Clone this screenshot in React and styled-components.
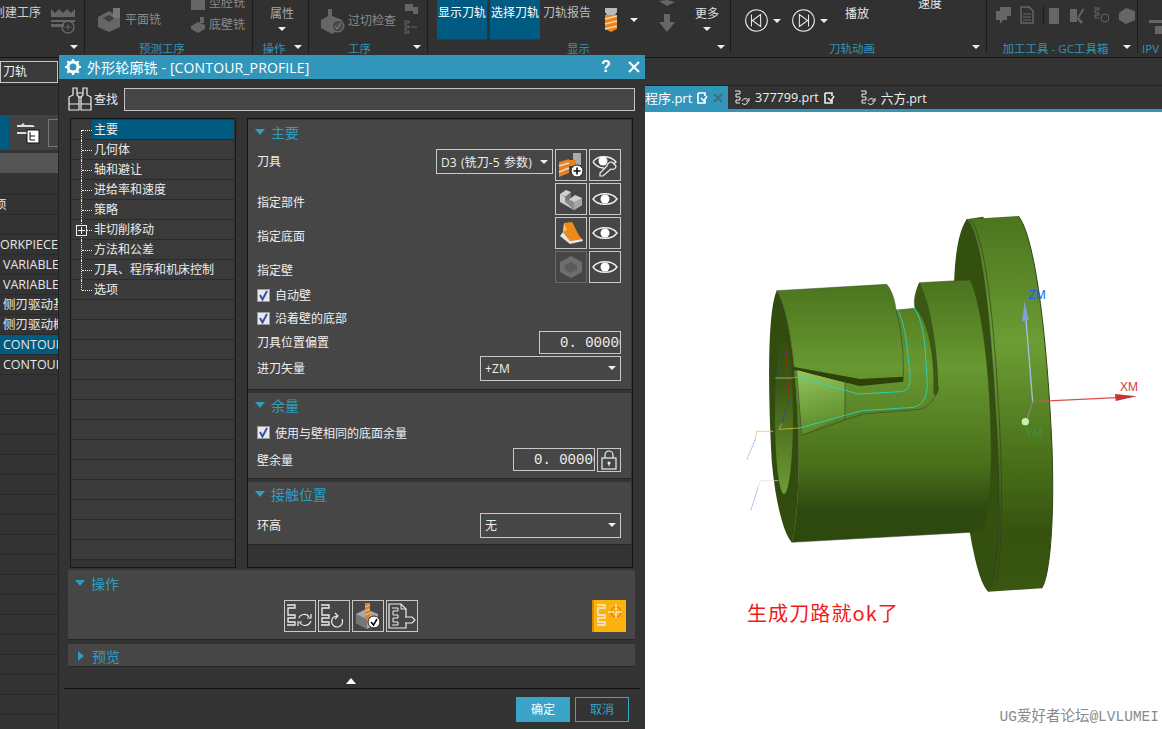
import React from 'react';
import styled, { createGlobalStyle } from 'styled-components';

const Global = createGlobalStyle`
  html, body { margin: 0; padding: 0; background: #333; }
  * { box-sizing: border-box; }
  body { font-family: "Open Sans", "Noto Sans CJK SC", sans-serif; font-size: 12px; color: #eee; }
`;

const Root = styled.div`
  position: relative; width: 1162px; height: 729px; overflow: hidden;
  display: flex; flex-direction: column; background: #333;
`;

/* ribbon */
const Ribbon = styled.div`
  display: flex; height: 58px; background: #313131; border-bottom: 1px solid #141414; flex: none; overflow: hidden;
`;
const Group = styled.div`
  width: ${p => p.$w}px; height: 57px; flex: none; position: relative; overflow: hidden;
  display: flex; flex-direction: column;
  &::after {
    content: ''; position: absolute; right: 0; top: 0; height: 53px; width: 1px;
    background: ${p => p.$last ? 'transparent' : '#1c1c1c'};
  }
`;
const GroupBody = styled.div`
  height: 42px; display: flex; align-items: flex-start; flex: none;
`;
const GroupFoot = styled.div`
  height: 13px; position: relative; display: flex; align-items: center; justify-content: center;
  padding-right: ${p => p.$pr || 0}px;
  font-size: 11.5px; line-height: 13px; color: #2f95b8; white-space: nowrap;
`;
const FootArrow = styled.span`
  position: absolute; right: ${p => p.$r || 6}px; top: 3px; width: 0; height: 0;
  border-left: 4px solid transparent; border-right: 4px solid transparent; border-top: 4px solid #eee;
`;
const Cell = styled.div`
  flex: none; width: ${p => p.$w}px; padding-top: ${p => p.$top || 0}px; margin-left: ${p => p.$ml || 0}px;
  margin-top: ${p => p.$mt || 0}px;
  display: flex; flex-direction: ${p => p.$col ? 'column' : 'row'}; align-items: center;
  gap: ${p => p.$gap || 0}px; white-space: nowrap; line-height: 16px;
  color: ${p => p.$c || '#8f8f8f'};
  justify-content: ${p => p.$center ? 'center' : 'flex-start'};
`;
const ClippedLabel = styled.span`margin-left: ${p => p.$ml}px;`;
const BlueBtn = styled.div`
  flex: none; width: 50px; height: 40px; margin-left: ${p => p.$ml || 0}px; background: #005b82;
  color: #fff; display: flex; justify-content: center; padding-top: 5px; line-height: 16px;
  white-space: nowrap; border-bottom: 1px solid #0d4762;
`;
const Caret = styled.span`
  display: inline-block; flex: none; width: 0; height: 0; margin-left: ${p => p.$ml || 0}px;
  border-left: 4px solid transparent; border-right: 4px solid transparent; border-top: 4px solid #eee;
`;

/* second row */
const FilterRow = styled.div`
  height: 28px; flex: none; background: #333; border-bottom: 1px solid #222; padding-top: 3px;
`;
const Combo = styled.div`
  width: 58px; height: 22px; border: 1px solid #c6c6c6; background: #3a3a3a; padding-left: 2px;
  line-height: 20px; font-size: 12px; color: #eee;
`;

/* main */
const Main = styled.div`display: flex; flex: 1; min-height: 0;`;
const Nav = styled.div`
  width: 58px; flex: none; overflow: hidden; display: flex; flex-direction: column; background: #333;
`;
const NavTools = styled.div`
  margin-top: 29px; height: 35px; background: #424242; display: flex; align-items: center; flex: none;
`;
const NavBlue = styled.div`width: 9px; height: 33px; background: #005b82; overflow: hidden; flex: none;`;
const NavIcon = styled.svg`margin-left: 7px; flex: none;`;
const NavGhost = styled.div`
  width: 14px; height: 28px; border: 1px solid #777; margin-left: 8px; flex: none;
`;
const NavHead = styled.div`height: 20px; margin-top: 3px; background: #555; flex: none;`;
const NavRow = styled.div`
  height: 20px; flex: none; margin-top: ${p => p.$first ? 2 : 0}px; padding-left: 3px; border-bottom: 1px solid #292929;
  background: ${p => p.$sel ? '#005b82' : '#333'}; line-height: 19px; white-space: nowrap; font-size: 12.5px;
  color: #e6e6e6; text-indent: ${p => p.$indent || 0}px;
`;

const Work = styled.div`flex: 1; display: flex; flex-direction: column; min-width: 0;`;
const TabBar = styled.div`
  height: 26px; flex: none; display: flex; border-bottom: 3px solid #3296bb; background: #333;
`;
const ActiveTab = styled.div`
  margin-left: 542px; width: 128px; background: #3296bb; display: flex; align-items: center;
  padding-left: 45px; gap: 5px; font-size: 13px; color: #fff;
`;
const TabClose = styled.span`display: flex; margin-left: 0;`;
const Tab = styled.div`
  display: flex; align-items: center; gap: 5px; font-size: 12.6px; color: #eee; margin-left: ${p => p.$ml || 0}px;
`;
const Canvas = styled.div`flex: 1; position: relative; background: #fff; overflow: hidden;`;
const ModelSvg = styled.svg`position: absolute; left: 672px; top: 88px;`;
const Note = styled.div`
  position: absolute; left: 689px; top: 487px; color: #f01a1a; font-size: 20px; line-height: 28px; letter-spacing: 1.1px;
  font-family: "Noto Sans CJK SC", sans-serif;
`;
const Watermark = styled.div`
  position: absolute; right: 3px; bottom: 4px; color: #8a8a8a; font-size: 14.5px; line-height: 16px;
  font-family: "Liberation Mono", "Noto Sans CJK SC", monospace;
`;

/* dialog */
const Dialog = styled.div`
  position: absolute; left: 58px; top: 55px; width: 587px; height: 674px; background: #333;
  border-left: 1px solid #222; display: flex; flex-direction: column;
`;
const Title = styled.div`
  height: 24px; flex: none; background: #3296bb; color: #fff; display: flex; align-items: center;
  padding-left: 6px; font-size: 14px; gap: 6px;
`;
const TitleText = styled.span`flex: 1; white-space: nowrap; letter-spacing: .14px;`;
const TitleBtn = styled.span`
  width: 22px; text-align: center; font-weight: 700; font-size: 16px; line-height: 24px; color: #fff;
  font-family: "Liberation Sans", sans-serif; display: flex; align-items: center; justify-content: center;
`;
const FindRow = styled.div`
  display: flex; align-items: center; height: 24px; margin-top: 8px; padding-left: 9px; flex: none;
`;
const FindLabel = styled.span`margin-left: 2px; font-size: 12px; color: #eee; width: 30px;`;
const FindInput = styled.div`width: 511px; height: 23px; background: #464646; border: 1px solid #c4c4c4;`;
const Panes = styled.div`
  display: flex; height: 450px; margin-top: 7px; padding-left: 11px; gap: 11px; flex: none;
`;
const Tree = styled.div`
  width: 166px; background: #333; border: 1px solid #181818; padding: 1px 1px 0 1px; overflow: hidden;
`;
const TreeRow = styled.div`
  position: relative; height: 20px; border-bottom: 1px solid #2a2a2a; background: #3a3a3a; padding-left: 20px;
`;
const TreeText = styled.span`
  display: block; height: 19px; line-height: 19px; padding-left: 2px; color: #ececec; white-space: nowrap;
  background: ${p => p.$sel ? '#005b82' : 'transparent'};
`;
const TreeLines = styled.span`
  position: absolute; left: 9px; top: ${p => p.$first ? 10 : 0}px; width: 10px;
  height: ${p => p.$end ? 10 : p.$first ? 10 : 20}px; border-left: 1px dotted #eee;
  &::after {
    content: ''; position: absolute; left: 0; top: ${p => p.$first ? 0 : 10}px; width: 10px; border-top: 1px dotted #eee;
  }
`;
const Plus = styled.svg`position: absolute; left: 4px; top: 5px;`;
const Right = styled.div`
  width: 386px; background: #333; border: 1px solid #111; padding-top: 1px;
  display: flex; flex-direction: column; gap: 3px;
`;
const Section = styled.div`
  height: ${p => p.$h}px; flex: none; width: ${p => p.$w || 383}px; margin-left: ${p => p.$ml || 0}px;
  margin-top: ${p => p.$mt || 0}px; background: #464646; border-bottom: 1px solid #262626;
  display: flex; flex-direction: column; padding: ${p => p.$bare ? '0' : '0 10px 0 9px'};
`;
const SecHead = styled.div`
  height: ${p => p.$h || 24}px; display: flex; align-items: center; gap: 6px; color: #2f9dbf; font-size: 14px; flex: none;
  margin-left: ${p => p.$bare ? 0 : -2}px; padding-left: ${p => p.$bare ? 7 : 0}px;
`;
const Down = styled.span`
  width: 0; height: 0; border-left: 5.5px solid transparent; border-right: 5.5px solid transparent; border-top: 6px solid #2f9dbf;
`;
const Side = styled.span`
  width: 0; height: 0; margin: 0 2px 0 3px; border-top: 5.5px solid transparent; border-bottom: 5.5px solid transparent; border-left: 6px solid #2f9dbf;
`;
const Row = styled.div`
  display: flex; align-items: center; height: ${p => p.$h}px; margin-top: ${p => p.$mt || 0}px; flex: none; gap: ${p => p.$gap || 0}px;
`;
const Label = styled.span`
  color: #eee; white-space: nowrap; margin-right: auto; padding-top: ${p => p.$pt || 0}px; padding-bottom: ${p => p.$pb || 0}px;
`;
const IconBtn = styled.div`
  width: ${p => p.$w || 32}px; height: ${p => p.$h || 32}px; flex: none; border: 1px solid ${p => p.$off ? '#6a6a6a' : '#c8c8c8'};
  display: flex; align-items: center; justify-content: center; background: #464646;
  margin-left: ${p => p.$ml || 0}px;
`;
const Select = styled.div`
  width: ${p => p.$w}px; height: 25px; flex: none; border: 1px solid #c8c8c8; display: flex; align-items: center;
  justify-content: space-between; padding: 0 4px 0 4px; color: #eee; font-size: 12px; white-space: nowrap;
  align-self: ${p => p.$top ? 'flex-start' : 'center'}; word-spacing: 1px; letter-spacing: .1px;
`;
const NumBox = styled.div`
  width: 82px; height: 23px; flex: none; border: 1px solid #c8c8c8; padding-left: 20px; overflow: hidden;
  font-family: "Liberation Mono", monospace; font-size: 14px; line-height: 22px; text-align: left; color: #eee; white-space: nowrap;
`;
const Check = styled.span`
  width: 13px; height: 13px; flex: none; background: #e9e9e9; border: 1px solid #9a9a9a; margin-right: 5px; display: flex;
  align-items: center; justify-content: center;
`;
const CheckRow = styled.div`display: flex; align-items: center; height: ${p => p.$h}px; flex: none; color: #eee; white-space: nowrap;`;

const OpsBtns = styled.div`
  display: flex; gap: 2px; padding-left: 216px; margin-top: 4px; align-items: center;
`;
const Hot = styled.div`
  width: 34px; height: 32px; margin-left: 172px; background: #fdb10c; border-left: 2px solid #d88b00;
  display: flex; align-items: center; justify-content: center;
`;
const Chevron = styled.div`
  height: 22px; flex: none; margin: 0 5px 0 5px; border-bottom: 1px solid #0f0f0f; display: flex; align-items: flex-end;
  justify-content: center; padding-bottom: 4px; padding-right: 2px;
`;
const Foot = styled.div`display: flex; justify-content: flex-end; gap: 5px; padding: 8px 16px 0 0; flex: none;`;
const Primary = styled.div`
  width: 54px; height: 25px; background: #3aa3c8; color: #fff; text-align: center; line-height: 25px;
`;
const Secondary = styled.div`
  width: 54px; height: 25px; border: 1px solid #3aa3c8; color: #3aa3c8; text-align: center; line-height: 23px;
`;

/* drawings */
const W = '#eee';
const Eye = () => (
  <svg width="26" height="18" viewBox="0 0 26 18" fill="none">
    <path d="M1 9C6 2 20 2 25 9C20 16 6 16 1 9Z" stroke={W} strokeWidth="1.4" />
    <circle cx="13" cy="9" r="4.5" fill="#fff" />
  </svg>
);
const EyeTool = () => (
  <svg width="26" height="26" viewBox="0 0 26 26" fill="none">
    <path d="M1 10C5 3 18 3 24 10C22 12 20 13 18 14" stroke={W} strokeWidth="1.3" />
    <path d="M1 10C4 14 8 16 12 16" stroke={W} strokeWidth="1.3" />
    <circle cx="11" cy="9" r="4.5" fill="#fff" />
    <path d="M22 12L24 14C24 17 21 18 19 17L11 24L8 24L8 21L15 14C15 12 17 10 20 10Z" stroke={W} strokeWidth="1.2" fill="#464646" />
  </svg>
);
const ToolAdd = () => (
  <svg width="26" height="26" viewBox="0 0 26 26">
    <rect x="15" y="1" width="8" height="12" fill="#aaa" />
    <path d="M1 10L11 7V21L1 25Z" fill="#e8801f" />
    <path d="M1 14L11 11M1 20L11 16" stroke="#ddd" strokeWidth="1.5" />
    <path d="M11 8h7v6h-7z" fill="#e8801f" />
    <circle cx="19" cy="19" r="6" fill="#fff" stroke="#222" />
    <path d="M19 15.5v7M15.5 19h7" stroke="#111" strokeWidth="1.6" />
  </svg>
);
const PartIcon = () => (
  <svg width="24" height="24" viewBox="0 0 24 24">
    <path d="M1 7L7 3L12 5V11L16 8L23 11V18L15 23L1 15Z" fill="#cfcfcf" />
    <path d="M1 7L6 10V15L15 23V15L8 11V10" fill="#8c8c8c" />
    <path d="M15 23L23 18V11L15 15Z" fill="#a5a5a5" />
    <path d="M6 10L12 5V11L8 14Z" fill="#757575" />
  </svg>
);
const FloorIcon = () => (
  <svg width="24" height="24" viewBox="0 0 24 24">
    <path d="M5 2L13 1C16 5 18 13 23 18L11 20L4 11Z" fill="#ef8a17" />
    <path d="M4 11L11 20L23 18L24 20L11 23L1 15Z" fill="#e6e6e6" />
    <path d="M5 2L4 11L8 9Z" fill="#f3c27e" />
  </svg>
);
const WallIcon = () => (
  <svg width="24" height="24" viewBox="0 0 24 24">
    <path d="M12 1L23 7V17L12 23L1 17V7Z" fill="#6e6e6e" />
    <path d="M12 7L18 10V15L12 18L6 15V10Z" fill="#5c5c5c" />
  </svg>
);
const Tick = () => (
  <svg width="11" height="11" viewBox="0 0 11 11" fill="none"><path d="M2 5L4.5 9.5L9 1" stroke="#3c4fa8" strokeWidth="2" /></svg>
);
const Path5 = ({ c = W, x = 0 }) => (
  <path transform={`translate(${x} 0)`} d="M1 2H9V5H2V12H9V15H2V19H9V22H1" stroke={c} strokeWidth="1.3" fill="none" />
);
const OpGen = () => (
  <svg width="28" height="26" viewBox="0 0 28 26" fill="none">
    <Path5 /><path d="M13 15C14 11 21 10 23 14M25 11V15H21M25 18C23 23 17 24 14 20M12 23V19H16" stroke={W} strokeWidth="1.2" />
  </svg>
);
const OpReplay = () => (
  <svg width="28" height="26" viewBox="0 0 28 26" fill="none">
    <Path5 /><path d="M22 16A5.5 5.5 0 1 1 17 13M15 10L18 13L15 16" stroke={W} strokeWidth="1.2" />
  </svg>
);
const OpCheck = () => (
  <svg width="28" height="28" viewBox="0 0 28 28">
    <path d="M2 12L12 7L24 12V21L13 27L2 21Z" fill="#a9a9a9" /><path d="M2 12L13 17V27L2 21Z" fill="#767676" />
    <path d="M11 1H16V17H11Z" fill="#e8801f" /><path d="M11 5L16 3M11 9L16 7M11 13L16 11" stroke="#ccc" />
    <circle cx="20" cy="20" r="6" fill="#fff" stroke="#222" /><path d="M17 20L19.5 23L23 17" stroke="#111" strokeWidth="1.6" fill="none" />
  </svg>
);
const OpList = () => (
  <svg width="28" height="26" viewBox="0 0 28 26" fill="none">
    <path d="M1 1H13L18 6V25H1Z" stroke={W} strokeWidth="1.2" /><path d="M13 1V6H18" stroke={W} />
    <path d="M4 5H10V8H5V12H10V15H5V19H10V22H4" stroke={W} />
    <path d="M17 14H24L27 17L24 20H17" stroke={W} strokeWidth="1.2" fill="#464646" />
  </svg>
);
const OpHot = () => (
  <svg width="28" height="26" viewBox="0 0 28 26" fill="none">
    <Path5 /><circle cx="20" cy="9" r="5" stroke="#e8601c" /><path d="M20 1V17M12 9H27" stroke="#fff" strokeWidth="1.1" strokeDasharray="6 2" />
  </svg>
);
const Lock = () => (
  <svg width="16" height="20" viewBox="0 0 16 20" fill="none">
    <path d="M4 8V5A4 4 0 0 1 12 5V8" stroke={W} strokeWidth="1.2" />
    <rect x="1" y="8" width="14" height="11" stroke={W} strokeWidth="1.2" />
    <circle cx="8" cy="13" r="1.5" fill={W} /><path d="M8 13v3" stroke={W} />
  </svg>
);
const Binoc = () => (
  <svg width="24" height="24" viewBox="0 0 24 24" fill="none" stroke="#eee" strokeWidth="1.2">
    <path d="M5 1H9V8L11 10V23H1V10L5 8ZM15 1H19V8L23 10V23H13V10L15 8ZM1 17H11M13 17H23M9 6H15M10 10H14" />
  </svg>
);
const Gear = () => (
  <svg width="16" height="16" viewBox="0 0 16 16">
    <circle cx="8" cy="8" r="5" fill="none" stroke="#fff" strokeWidth="3" />
    <path d="M8 0V3M8 13V16M0 8H3M13 8H16M2.3 2.3L4.4 4.4M11.6 11.6L13.7 13.7M2.3 13.7L4.4 11.6M11.6 4.4L13.7 2.3" stroke="#fff" strokeWidth="2.2" />
  </svg>
);
const X = () => (
  <svg width="12" height="12" viewBox="0 0 12 12"><path d="M1 1L11 11M11 1L1 11" stroke="#fff" strokeWidth="2" /></svg>
);
const DocMark = ({ c = '#fff' }) => (
  <svg width="11" height="12" viewBox="0 0 11 12" fill="none">
    <path d="M1 1H8V4M8 8V11H1V1" stroke={c} strokeWidth="1.6" /><path d="M4 6L7 9L10 4" stroke={c} strokeWidth="1.5" />
  </svg>
);
const FileSync = () => (
  <svg width="16" height="16" viewBox="0 0 16 16" fill="none" stroke="#eee">
    <path d="M1 1H6V4H2V7H6V10H2V13H6" /><path d="M8 11C9 8 13 8 14 10M15 8V11H12M14 12C13 15 9 15 8 13" />
  </svg>
);
const G = '#666';
const Gray = ({ w = 24, h = 24, children, vb }) => (
  <svg width={w} height={h} viewBox={vb || `0 0 ${w} ${h}`} fill={G} stroke="none">{children}</svg>
);
const Mill = () => (
  <svg width="18" height="26" viewBox="0 0 18 26">
    <path d="M3 1H15V5L13 8H5L3 5Z" fill="#b9b9b9" />
    <path d="M3 8H15V22L9 25L3 22Z" fill="#ef8317" />
    <path d="M3 12L15 9M3 17L15 14M3 22L15 19" stroke="#f4d6b0" strokeWidth="1.5" />
  </svg>
);
const Circ = ({ flip }) => (
  <svg width="25" height="25" viewBox="0 0 25 25" fill="none" stroke="#eee" strokeWidth="1.1">
    <circle cx="12.5" cy="12.5" r="11.8" />
    {flip ? <path d="M8 6V19L17 12.5ZM18 6V19" /> : <path d="M17 6V19L8 12.5ZM7 6V19" />}
  </svg>
);

const Model = () => (
  <ModelSvg width="420" height="400" viewBox="0 0 1260 1200">
    <defs>
      <linearGradient id="g1" x1="0" y1="0" x2="0" y2="1">
        <stop offset="0" stopColor="#4a731d" /><stop offset=".33" stopColor="#689831" />
        <stop offset=".7" stopColor="#4a701a" /><stop offset=".88" stopColor="#2e4910" /><stop offset="1" stopColor="#2e4910" />
      </linearGradient>
      <linearGradient id="g2" x1="0" y1="0" x2="0" y2="1">
        <stop offset="0" stopColor="#4c741e" /><stop offset=".34" stopColor="#6c9d34" />
        <stop offset=".6" stopColor="#4f771d" /><stop offset=".85" stopColor="#35520f" /><stop offset="1" stopColor="#3a5812" />
      </linearGradient>
      <linearGradient id="g3" x1="0" y1="0" x2="0.2" y2="1">
        <stop offset="0" stopColor="#96c65e" /><stop offset="1" stopColor="#5a8a28" />
      </linearGradient>
      <linearGradient id="g4" x1="0" y1="0" x2="0" y2="1">
        <stop offset="0" stopColor="#34500f" /><stop offset=".3" stopColor="#3a5813" /><stop offset="1" stopColor="#6e9e36" />
      </linearGradient>
    </defs>
    <path d="M710 58C668 120 668 280 675 420L720 1000C735 1090 755 1160 775 1175L840 1100L840 300L760 50Z" fill="#34500f" />
    <path d="M710 58L865 48C915 110 950 400 965 720C975 950 960 1130 935 1165L775 1175C810 1120 812 900 800 700C785 400 760 110 710 58Z" fill="url(#g2)" />
    <path d="M710 58C760 110 785 400 800 700C812 900 810 1120 775 1175" fill="none" stroke="#333" strokeWidth="2" />
    <path d="M720 58C770 110 795 400 810 700C820 900 815 1120 790 1170" fill="none" stroke="#2d4410" strokeWidth="2" />
    <path d="M865 48C915 110 950 400 965 720C975 950 960 1130 935 1165" fill="none" stroke="#2d4410" strokeWidth="3" />

    <path d="M140 272L470 253C485 270 495 300 498 330L555 325C550 300 555 280 568 248L720 240C770 340 795 700 778 880C772 950 765 985 755 995L185 1027C200 980 208 860 205 720C200 500 175 320 140 272Z" fill="url(#g1)" stroke="#3a4a25" strokeWidth="1.5" />
    <path d="M555 325C553 295 558 270 568 248C600 300 625 450 625 570C622 585 615 590 610 580C615 480 595 360 555 325Z" fill="#3a5813" />
    <path d="M140 272C110 340 115 600 125 780C135 900 160 1000 185 1027C200 980 208 860 205 720C200 500 175 320 140 272Z" fill="#324c10" />
    <ellipse cx="162" cy="650" rx="27" ry="232" fill="url(#g4)" />
    <path d="M188 500L390 537L520 530L520 545L390 558L190 510Z" fill="#2c4209" />
    <path d="M200 510L345 548L345 645L215 706Z" fill="url(#g3)" />
    <path d="M200 510L215 706L345 660L400 642L570 628C600 620 620 590 625 560M345 548L345 660M498 330C510 370 522 450 520 530" fill="none" stroke="#333" strokeWidth="1.6" />
    <g fill="none" stroke="#1ee0d0" strokeWidth="2.4">
      <path d="M190 532H205L350 572L385 582L510 575C535 572 542 560 540 520L530 430C525 390 515 350 502 330" />
      <path d="M205 685L395 632L550 622C580 615 592 590 592 550L585 440C580 390 570 350 552 323" />
    </g>
    <path d="M168 450L178 600" stroke="#e01212" strokeWidth="2.5" strokeDasharray="7 4" fill="none" />
    <path d="M165 455L140 530M178 600L150 685" stroke="#2038c0" strokeWidth="2" strokeDasharray="5 2" fill="none" />
    <path d="M136 534H190" stroke="#d9c8c0" strokeWidth="2" />
    <path d="M148 688L205 684M148 688L155 670M130 694H80L75 720" stroke="#eac22a" strokeWidth="2.2" fill="none" />
    <path d="M75 720L50 780" stroke="#5060d8" strokeWidth="2" strokeDasharray="3 2" />
    <path d="M145 842H92L85 860" stroke="#f3d8df" strokeWidth="2" fill="none" />
    <path d="M85 860L62 932" stroke="#5060d8" strokeWidth="2" strokeDasharray="3 2" />
    <path d="M908 605L888 360" stroke="#9cc0ee" strokeWidth="4" />
    <path d="M884 304L876 364L896 360Z" fill="#7f9fe0" />
    <path d="M908 605L1160 593" stroke="#d8504c" strokeWidth="4" />
    <path d="M1155 582L1220 589L1157 603Z" fill="#c83434" />
    <path d="M908 605L890 660" stroke="#88958a" strokeWidth="3" />
    <circle cx="886" cy="665" r="11" fill="#c4f0b0" />
    <text x="895" y="297" fontSize="36" fill="#1a5cf0" fontFamily="Liberation Sans">ZM</text>
    <text x="1170" y="574" fontSize="36" fill="#d23a3a" fontFamily="Liberation Sans">XM</text>
    <text x="885" y="711" fontSize="36" fill="#3f8f3f" fontFamily="Liberation Sans">YM</text>
  </ModelSvg>
);

const navRows = [
  { t: '' }, { t: '项', indent: -9 }, { t: '' }, { t: 'ORKPIECE', indent: -3 }, { t: 'VARIABLE' }, { t: 'VARIABLE' },
  { t: '侧刃驱动基' }, { t: '侧刃驱动概' }, { t: 'CONTOUR', sel: true }, { t: 'CONTOUR' },
  ...Array.from({ length: 18 }, () => ({ t: '' })),
];
const treeItems = ['主要', '几何体', '轴和避让', '进给率和速度', '策略', '非切削移动', '方法和公差', '刀具、程序和机床控制', '选项',
  ...Array(13).fill('')];
const ZERO = '0. 00000';

export default function App() {
  return (
    <Root>
      <Global />
      <Ribbon>
        <Group $w={85}>
          <GroupBody>
            <Cell $w={48} $top={5} $c="#cfcfcf"><ClippedLabel $ml={-7}>创建工序</ClippedLabel></Cell>
            <Cell $w={30} $top={6} $ml={2}>
              <Gray w={26} h={28}><path d="M1 3L5 7L9 3L13 7L17 3L21 7L25 3V11H1ZM1 14H25V16H1ZM1 18H14V21H1Z" /><circle cx="18" cy="21" r="6" fill="none" stroke={G} strokeWidth="1.5" /><path d="M18 17.5v7M14.5 21h7" stroke={G} /></Gray>
            </Cell>
          </GroupBody>
          <GroupFoot><FootArrow $r={7} /></GroupFoot>
        </Group>
        <Group $w={168}>
          <GroupBody>
            <Cell $w={90} $ml={12} $top={8} $gap={4} $c="#8b8b8b">
              <Gray w={24} h={24}><path d="M1 9L12 3L23 9V19L12 24L1 19Z" /><path d="M6 10L12 7L18 10L12 14Z" fill="#3f3f3f" /><path d="M16 0H23V10H16Z" fill="#777" /></Gray>
              <span>平面铣</span>
            </Cell>
            <Cell $w={62} $col $gap={5} $c="#8b8b8b" $ml={3}>
              <Cell $w={62} $gap={3} $c="#8b8b8b" $mt={-5}>
                <Gray w={16} h={16}><path d="M1 1H15V15H1Z" /></Gray><span>型腔铣</span>
              </Cell>
              <Cell $w={62} $gap={3} $c="#8b8b8b" $mt={1}>
                <Gray w={16} h={16}><path d="M1 9L8 5L15 8V12L8 16L1 12ZM10 0H14V6H10Z" /></Gray><span>底壁铣</span>
              </Cell>
            </Cell>
          </GroupBody>
          <GroupFoot $pr={14}>预测工序</GroupFoot>
        </Group>
        <Group $w={56}>
          <GroupBody>
            <Cell $w={56} $col $center $top={6} $c="#a8a8a8" $gap={5} $ml={1}><span>属性</span><Caret /></Cell>
          </GroupBody>
          <GroupFoot $pr={14}>操作<FootArrow $r={7} /></GroupFoot>
        </Group>
        <Group $w={119}>
          <GroupBody>
            <Cell $w={85} $ml={11} $top={8} $gap={2} $c="#8b8b8b">
              <Gray w={26} h={26}><path d="M1 12L8 8V1H12V8L22 12V20L12 26L1 20Z" /><circle cx="18" cy="18" r="6" fill="#4a4a4a" stroke="#777" /><path d="M15 18L17 21L21 15" stroke="#888" fill="none" /></Gray>
              <span>过切检查</span>
            </Cell>
            <Cell $w={18} $top={2} $col $gap={6} $ml={-3}>
              <Gray w={16} h={12}><path d="M2 2H10V9H2ZM10 5H15V12H10Z" /></Gray>
              <Gray w={16} h={14}><path d="M1 1H6V3H2V6H6V8H2V11H6V13H1M8 7H14" stroke={G} fill="none" /></Gray>
            </Cell>
          </GroupBody>
          <GroupFoot $pr={18}>工序<FootArrow $r={7} /></GroupFoot>
        </Group>
        <Group $w={303}>
          <GroupBody>
            <BlueBtn $ml={9}>显示刀轨</BlueBtn>
            <BlueBtn $ml={3}>选择刀轨</BlueBtn>
            <Cell $w={50} $ml={3} $top={5} $c="#bdbdbd">刀轨报告</Cell>
            <Cell $w={40} $ml={9} $top={7}><Mill /><Caret $ml={10} /></Cell>
            <Cell $w={20} $ml={15} $col $gap={6}>
              <Gray w={18} h={8}><path d="M1 1L9 0L17 2L9 6Z" /></Gray>
              <Gray w={18} h={18}><path d="M6 0H12V8H17L9 18L1 8H6Z" /></Gray>
            </Cell>
            <Cell $w={24} $ml={18} $top={6} $col $gap={5} $c="#e0e0e0"><span>更多</span><Caret /></Cell>
          </GroupBody>
          <GroupFoot $pr={2}>显示<FootArrow $r={6} /></GroupFoot>
        </Group>
        <Group $w={256}>
          <GroupBody>
            <Cell $w={36} $ml={14} $top={8}><Circ /><Caret $ml={5} /></Cell>
            <Cell $w={36} $ml={11} $top={8}><Circ flip /><Caret $ml={5} /></Cell>
            <Cell $w={24} $ml={17} $top={6} $c="#e8e8e8">播放</Cell>
            <Cell $w={24} $ml={49} $mt={-4} $c="#e8e8e8">速度</Cell>
          </GroupBody>
          <GroupFoot $pr={14}>刀轨动画<FootArrow $r={7} /></GroupFoot>
        </Group>
        <Group $w={151}>
          <GroupBody>
            <Cell $w={142} $ml={8} $top={6} $gap={9}>
              <Gray w={16} h={18}><path d="M5 1H16V10H5ZM1 5H12V14H8L5 18V14H1Z" /></Gray>
              <Gray w={14} h={18}><path d="M1 1H9L13 5V17H1Z" fill="none" stroke={G} strokeWidth="1.4" /><path d="M3 8H11M3 11H11M3 14H11" stroke={G} /></Gray>
              <Gray w={16} h={18}><path d="M0 0H1V18H0Z" fill="#1c1c1c" /><path d="M6 2H16V18H6Z" /></Gray>
              <Gray w={16} h={18}><path d="M2 3H9V16H2ZM10 10L15 2L16 4L11 12L15 16L13 18L9 13Z" /></Gray>
              <Gray w={16} h={18}><path d="M1 2H6V4H2V7H6V9H2V12H6" fill="none" stroke={G} /><circle cx="12" cy="12" r="4" fill="none" stroke={G} /></Gray>
              <Gray w={17} h={18}><path d="M1 7L8 2L17 5V14L8 18L1 14Z" /></Gray>
            </Cell>
          </GroupBody>
          <GroupFoot $pr={14}>加工工具 - GC工具箱<FootArrow $r={7} /></GroupFoot>
        </Group>
        <Group $w={25} $last>
          <GroupBody>
            <Cell $w={25} $ml={11} $top={14}>
              <Gray w={14} h={20}><path d="M0 6H14V9H0ZM6 12H14V20H6Z" /></Gray>
            </Cell>
          </GroupBody>
          <GroupFoot>IPV</GroupFoot>
        </Group>
      </Ribbon>

      <FilterRow><Combo>刀轨</Combo></FilterRow>

      <Main>
        <Nav>
          <NavTools>
            <NavBlue />
            <NavIcon width="24" height="22" viewBox="0 0 24 22">
              <path d="M1 3H5L7 1L9 3H17L19 5H1ZM1 10H11V12H1Z" fill="#ddd" />
              <rect x="11" y="8" width="12" height="13" fill="#fff" stroke="#111" />
              <path d="M14 10V18H19M14 14H19" stroke="#111" fill="none" />
            </NavIcon>
            <NavGhost />
          </NavTools>
          <NavHead />
          {navRows.map((r, i) => (
            <NavRow key={i} $first={i === 0} $sel={r.sel} $indent={r.indent}>{r.t}</NavRow>
          ))}
        </Nav>
        <Work>
          <TabBar>
            <ActiveTab>
              <span>程序.prt</span>
              <DocMark />
              <TabClose><svg width="10" height="10" viewBox="0 0 10 10"><path d="M1 1L9 9M9 1L1 9" stroke="#3a6f84" strokeWidth="2" /></svg></TabClose>
            </ActiveTab>
            <Tab $ml={6}><FileSync /><span>377799.prt</span><DocMark c="#eee" /></Tab>
            <Tab $ml={25}><FileSync /><span>六方.prt</span></Tab>
          </TabBar>
          <Canvas>
            <Model />
            <Note>生成刀路就ok了</Note>
            <Watermark>UG爱好者论坛@LVLUMEI</Watermark>
          </Canvas>
        </Work>
      </Main>

      <Dialog>
        <Title>
          <Gear />
          <TitleText>外形轮廓铣 - [CONTOUR_PROFILE]</TitleText>
          <TitleBtn>?</TitleBtn>
          <TitleBtn><X /></TitleBtn>
        </Title>
        <FindRow><Binoc /><FindLabel>查找</FindLabel><FindInput /></FindRow>
        <Panes>
          <Tree>
            {treeItems.map((t, i) => (
              <TreeRow key={i}>
                {t && <TreeLines $first={i === 0} $end={i === 8} />}
                {t === '非切削移动' && (
                  <Plus width="11" height="11" viewBox="0 0 11 11"><rect x=".5" y=".5" width="10" height="10" fill="#3a3a3a" stroke="#eee" /><path d="M2 5.5H9M5.5 2V9" stroke="#eee" /></Plus>
                )}
                <TreeText $sel={i === 0}>{t}</TreeText>
              </TreeRow>
            ))}
          </Tree>
          <Right>
            <Section $h={270}>
              <SecHead $h={23}><Down />主要</SecHead>
              <Row $h={32} $mt={6} $gap={2}>
                <Label $pb={8}>刀具</Label>
                <Select $w={117} $top>D3 (铣刀-5 参数)<Caret /></Select>
                <IconBtn><ToolAdd /></IconBtn>
                <IconBtn><EyeTool /></IconBtn>
              </Row>
              <Row $h={32} $mt={2} $gap={2}><Label $pt={6}>指定部件</Label><IconBtn><PartIcon /></IconBtn><IconBtn><Eye /></IconBtn></Row>
              <Row $h={32} $mt={2} $gap={2}><Label $pt={6}>指定底面</Label><IconBtn><FloorIcon /></IconBtn><IconBtn><Eye /></IconBtn></Row>
              <Row $h={32} $mt={2} $gap={2}><Label $pt={6}>指定壁</Label><IconBtn $off><WallIcon /></IconBtn><IconBtn><Eye /></IconBtn></Row>
              <CheckRow $h={24}><Check><Tick /></Check>自动壁</CheckRow>
              <CheckRow $h={22}><Check><Tick /></Check>沿着壁的底部</CheckRow>
              <Row $h={24} $mt={1}><Label>刀具位置偏置</Label><NumBox>{ZERO}</NumBox></Row>
              <Row $h={26} $mt={1}><Label>进刀矢量</Label><Select $w={141}>+ZM<Caret /></Select></Row>
            </Section>
            <Section $h={86}>
              <SecHead $h={24}><Down />余量</SecHead>
              <CheckRow $h={31}><Check><Tick /></Check>使用与壁相同的底面余量</CheckRow>
              <Row $h={23}><Label>壁余量</Label><NumBox>{ZERO}</NumBox><IconBtn $w={24} $h={24} $ml={2}><Lock /></IconBtn></Row>
            </Section>
            <Section $h={63}>
              <SecHead $h={24}><Down />接触位置</SecHead>
              <Row $h={28} $mt={5}><Label>环高</Label><Select $w={141}>无<Caret /></Select></Row>
            </Section>
          </Right>
        </Panes>
        <Section $h={70} $w={567} $ml={9} $mt={2} $bare>
          <SecHead $h={26} $bare><Down />操作</SecHead>
          <OpsBtns>
            <IconBtn><OpGen /></IconBtn>
            <IconBtn><OpReplay /></IconBtn>
            <IconBtn><OpCheck /></IconBtn>
            <IconBtn><OpList /></IconBtn>
            <Hot><OpHot /></Hot>
          </OpsBtns>
        </Section>
        <Section $h={23} $w={567} $ml={9} $mt={4} $bare>
          <SecHead $h={23} $bare><Side />预览</SecHead>
        </Section>
        <Chevron>
          <svg width="10" height="6" viewBox="0 0 10 6"><path d="M5 0L10 6H0Z" fill="#fff" /></svg>
        </Chevron>
        <Foot>
          <Primary>确定</Primary>
          <Secondary>取消</Secondary>
        </Foot>
      </Dialog>
    </Root>
  );
}
